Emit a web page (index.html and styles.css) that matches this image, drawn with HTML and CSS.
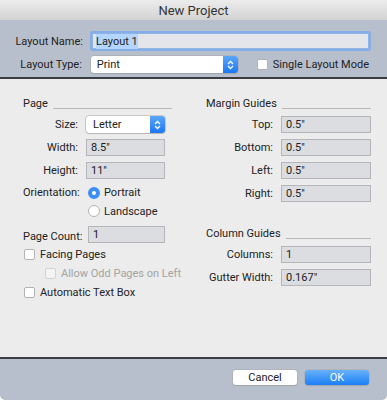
FILE: index.html
```html
<!DOCTYPE html>
<html>
<head>
    <title>New Project</title>
    <link rel="stylesheet" href="styles.css">
</head>
<body>
    <div class="window">
        <div class="titlebar">New Project</div>

        <div class="header">
            <div class="hrow">
                <label class="hlabel">Layout Name:</label>
                <div class="field focus"><span class="sel">Layout 1</span></div>
            </div>
            <div class="hrow">
                <label class="hlabel">Layout Type:</label>
                <div class="popup wide">
                    <span>Print</span>
                    <span class="arrows"><svg width="7" height="10" viewBox="0 0 7 10"><path d="M1 4 L3.5 1.5 L6 4 M1 6 L3.5 8.5 L6 6" fill="none" stroke="#fff" stroke-width="1.3"/></svg></span>
                </div>
                <div class="check single"><span class="box"></span>Single Layout Mode</div>
            </div>
        </div>

        <div class="content">
            <div class="col left">
                <div class="heading">Page<span class="rule"></span></div>
                <div class="grid">
                    <label>Size:</label>
                    <div class="popup">
                        <span>Letter</span>
                        <span class="arrows"><svg width="7" height="10" viewBox="0 0 7 10"><path d="M1 4 L3.5 1.5 L6 4 M1 6 L3.5 8.5 L6 6" fill="none" stroke="#fff" stroke-width="1.3"/></svg></span>
                    </div>
                    <label>Width:</label>
                    <div class="field">8.5"</div>
                    <label>Height:</label>
                    <div class="field">11"</div>
                    <label class="end">Orientation:</label>
                    <div class="radio end"><span class="dot on"></span>Portrait</div>
                    <span></span>
                    <div class="radio"><span class="dot"></span>Landscape</div>
                    <label class="lft end">Page Count:</label>
                    <div class="field count">1</div>
                </div>
                <div class="checks">
                    <div class="check"><span class="box"></span>Facing Pages</div>
                    <div class="check sub off"><span class="box"></span>Allow Odd Pages on Left</div>
                    <div class="check"><span class="box"></span>Automatic Text Box</div>
                </div>
            </div>

            <div class="col right">
                <div class="heading">Margin Guides<span class="rule"></span></div>
                <div class="grid">
                    <label>Top:</label>
                    <div class="field">0.5"</div>
                    <label>Bottom:</label>
                    <div class="field">0.5"</div>
                    <label>Left:</label>
                    <div class="field">0.5"</div>
                    <label>Right:</label>
                    <div class="field">0.5"</div>
                </div>
                <div class="heading second">Column Guides<span class="rule"></span></div>
                <div class="grid">
                    <label>Columns:</label>
                    <div class="field">1</div>
                    <label>Gutter Width:</label>
                    <div class="field">0.167"</div>
                </div>
            </div>
        </div>

        <div class="footer">
            <button class="btn">Cancel</button>
            <button class="btn primary">OK</button>
        </div>
    </div>
</body>
</html>
```

FILE: styles.css
```css
body {
    margin: 0;
    background: #ffffff;
    font-family: Roboto, "Liberation Sans", sans-serif;
    font-size: 11px;
    color: #222222;
}
.window {
    width: 387px;
    height: 400px;
    display: flex;
    flex-direction: column;
    border-radius: 0 0 5px 5px;
    overflow: hidden;
    white-space: nowrap;
}
.titlebar {
    height: 20px;
    line-height: 22px;
    text-align: center;
    font-size: 13px;
    color: #333333;
    background: linear-gradient(#ececec, #d3d3d3);
}
.header {
    height: 59px;
    background: #b8bfcc;
    border-bottom: 2px solid #3b3d42;
    padding: 13px 18px 0 0;
    box-sizing: border-box;
    display: flex;
    flex-direction: column;
    gap: 7px;
}
.hrow {
    display: flex;
    align-items: center;
}
.hlabel {
    width: 83px;
    text-align: right;
    margin-right: 9px;
}
.hrow .field.focus {
    flex: 1;
    height: 16px;
    line-height: 16px;
    box-sizing: border-box;
    background: #e3e5ea;
    border: 1px solid #8fb4e8;
    box-shadow: 0 0 0 2px #85aee6;
    border-radius: 1px;
    padding-left: 3px;
}
.sel {
    background: #b4d5fd;
    padding: 1px 0;
}
.popup {
    height: 17px;
    background: #ffffff;
    border-radius: 3px;
    box-shadow: 0 0 0 0.5px #a6a6a6, 0 1px 1px rgba(0, 0, 0, 0.15);
    display: flex;
    align-items: center;
    justify-content: space-between;
    padding-left: 7px;
    box-sizing: border-box;
}
.popup.wide {
    width: 149px;
    padding-left: 6px;
}
.arrows {
    width: 15px;
    height: 17px;
    background: linear-gradient(#5ba6f9, #1c77f5);
    border-radius: 0 3px 3px 0;
    display: flex;
    align-items: center;
    justify-content: center;
}
.check {
    display: flex;
    align-items: center;
    height: 13px;
}
.box {
    flex-shrink: 0;
    width: 9px;
    height: 9px;
    background: #ffffff;
    border: 1px solid #b3b3b3;
    border-radius: 2px;
    margin-right: 5px;
}
.single {
    margin-left: 19px;
}
.content {
    flex: 1;
    background: #ececec;
    border-bottom: 2px solid #3b3d42;
    display: flex;
    padding: 19px 16px 0 23px;
    gap: 34px;
}
.col.left {
    width: 149px;
}
.col.right {
    flex: 1;
}
.heading {
    display: flex;
    align-items: flex-end;
    height: 12px;
    margin-bottom: 6px;
}
.heading.second {
    margin-top: 26px;
}
.rule {
    flex: 1;
    height: 1px;
    background: #b8b8b8;
    margin-left: 5px;
    margin-bottom: 1px;
}
.grid {
    display: grid;
    align-items: center;
    row-gap: 6px;
}
.left .grid {
    grid-template-columns: 55px 79px;
    column-gap: 8px;
    grid-template-rows: 17px 17px 17px 14px 12px 20px;
}
.right .grid {
    grid-template-columns: 67px 90px;
    column-gap: 8px;
    grid-auto-rows: 17px;
}
.grid .end {
    align-self: end;
}
.grid label {
    text-align: right;
}
.grid label.lft {
    text-align: left;
}
.grid .field {
    height: 17px;
    box-sizing: border-box;
    background: #dcdde0;
    border: 1px solid #b5b6b9;
    padding-left: 4px;
    line-height: 15px;
}
.grid .field.count {
    align-self: end;
    margin-left: 2px;
}
.radio {
    display: flex;
    align-items: center;
    margin-left: 2px;
}
.dot {
    width: 12px;
    height: 12px;
    border-radius: 50%;
    border: 1px solid #b3b3b3;
    background: #ffffff;
    margin-right: 4px;
    box-sizing: border-box;
}
.dot.on {
    border: 4px solid #3d8ff7;
    background: #ffffff;
}
.checks {
    display: flex;
    flex-direction: column;
    gap: 6px;
    margin-top: 5px;
    padding-left: 1px;
}
.check.sub {
    margin-left: 21px;
}
.check.off {
    color: #a3a3a3;
}
.check.off .box {
    border-color: #d2d2d2;
    background: #f4f4f4;
}
.footer {
    height: 41px;
    background: #b8bfcc;
    display: flex;
    justify-content: flex-end;
    align-items: flex-start;
    padding: 11px 18px 0 0;
    box-sizing: border-box;
    gap: 8px;
}
.btn {
    width: 64px;
    height: 15px;
    border: none;
    border-radius: 3px;
    background: #ffffff;
    box-shadow: 0 0 0 0.5px #a9a9a9, 0 1px 1px rgba(0, 0, 0, 0.15);
    font-family: Roboto, "Liberation Sans", sans-serif;
    font-size: 11px;
    color: #222222;
    padding: 0;
}
.btn.primary {
    background: linear-gradient(#68b1fb, #1b7ff6);
    color: #ffffff;
}
```
